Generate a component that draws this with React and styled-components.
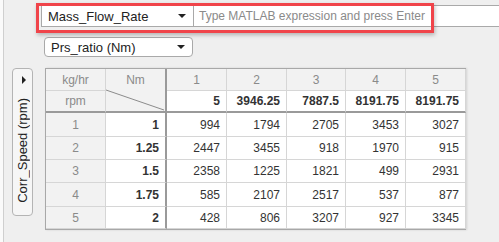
import React from "react";
import styled, { createGlobalStyle } from "styled-components";

const Global = createGlobalStyle`
  html, body {
    margin: 0;
    padding: 0;
    background: #f7f7f7;
    font-family: "Liberation Sans", Arial, sans-serif;
    font-size: 12px;
    color: #333;
  }
`;

const Page = styled.div`
  width: 499px;
  height: 242px;
  overflow: hidden;
  display: flex;
`;

const Gutter = styled.div`
  width: 3px;
  background: #fafafa;
  border-right: 1px solid #cfcfcf;
`;

const Panel = styled.div`
  position: relative;
  flex: 1;
  background: #efefef;
  display: flex;
  flex-direction: column;
`;

const Toolbar = styled.div`
  display: flex;
  margin-top: 5px;
  padding-left: 37px;
  height: 22px;
`;

const Select = styled.div`
  box-sizing: border-box;
  width: ${p => p.$w}px;
  height: ${p => p.$h || 22}px;
  background: #fff;
  border: 1px solid #a9a9a9;
  border-radius: ${p => (p.$round ? 4 : 0)}px;
  display: flex;
  align-items: center;
  justify-content: space-between;
  padding: 0 7px 0 6px;
  font-size: 13px;
  color: #222;
`;

const Caret = styled.span`
  width: 0;
  height: 0;
  border-left: 4px solid transparent;
  border-right: 4px solid transparent;
  border-top: 4px solid #222;
`;

const Expr = styled.div`
  box-sizing: border-box;
  flex: 1;
  height: 22px;
  background: #fff;
  border-top: 1px solid #a9a9a9;
  border-bottom: 1px solid #a9a9a9;
  display: flex;
  align-items: center;
  padding-left: 5px;
  color: #8a8a8a;
  font-size: 12px;
  white-space: nowrap;
`;

const Highlight = styled.div`
  position: absolute;
  left: 32px;
  top: 3px;
  width: 398px;
  height: 30px;
  box-sizing: border-box;
  border: 3px solid #f0444a;
  box-shadow: 1px 2px 4px rgba(0, 0, 0, 0.25);
  pointer-events: none;
`;

const SecondRow = styled.div`
  margin-top: 10px;
  padding-left: 40px;
  display: flex;
`;

const Body = styled.div`
  display: flex;
  margin-top: 11px;
  padding-left: 8px;
  gap: 12px;
`;

const Tab = styled.div`
  box-sizing: border-box;
  width: 21px;
  height: 148px;
  background: #f6f6f6;
  border: 1px solid #b4b4b4;
  border-radius: 4px;
  display: flex;
  flex-direction: column;
  align-items: center;
  padding-top: 7px;
`;

const TabArrow = styled.span`
  width: 0;
  height: 0;
  border-top: 4px solid transparent;
  border-bottom: 4px solid transparent;
  border-left: 4px solid #222;
  margin-left: 2px;
`;

const TabLabel = styled.span`
  writing-mode: vertical-rl;
  transform: rotate(180deg);
  font-size: 13px;
  color: #222;
  margin-top: 14px;
  white-space: nowrap;
`;

const Grid = styled.div`
  display: grid;
  grid-template-columns: 60px 61px 60px 60px 59px 60px 60px;
  grid-template-rows: 22px 22px 24px 23px 23px 24px 22px;
  border-top: 1px solid #a8a8a8;
  border-left: 1px solid #a8a8a8;
  border-bottom: 1px solid #a8a8a8;
  background: #fff;
  box-shadow: 1px 0 2px rgba(0, 0, 0, 0.12);
`;

const Cell = styled.div`
  box-sizing: border-box;
  display: flex;
  align-items: center;
  justify-content: ${p => (p.$center ? "center" : "flex-end")};
  padding: 0 6px;
  background: ${p => (p.$head ? "#f2f2f2" : "#fff")};
  color: ${p => (p.$head ? "#8a8a8a" : "#333")};
  font-weight: ${p => (p.$bold ? "bold" : "normal")};
  border-right: ${p => (p.$thickRight ? "2px solid #9a9a9a" : "1px solid #d6d6d6")};
  border-bottom: ${p => (p.$thickBottom ? "2px solid #9a9a9a" : "1px solid #d6d6d6")};
  font-size: 12px;
`;

const Corner = styled.div`
  position: relative;
  grid-row: span 2;
  box-sizing: border-box;
  background: #f2f2f2;
  border-right: 2px solid #9a9a9a;
  border-bottom: 2px solid #9a9a9a;
  color: #8a8a8a;
  text-align: center;
  padding-top: 4px;
  & svg {
    position: absolute;
    left: 0;
    bottom: 0;
  }
`;

const cols = [
  { id: 1, v: "5" },
  { id: 2, v: "3946.25" },
  { id: 3, v: "7887.5" },
  { id: 4, v: "8191.75" },
  { id: 5, v: "8191.75" },
];

const rows = [
  { id: 1, k: "1", d: [994, 1794, 2705, 3453, 3027] },
  { id: 2, k: "1.25", d: [2447, 3455, 918, 1970, 915] },
  { id: 3, k: "1.5", d: [2358, 1225, 1821, 499, 2931] },
  { id: 4, k: "1.75", d: [585, 2107, 2517, 537, 877] },
  { id: 5, k: "2", d: [428, 806, 3207, 927, 3345] },
];

export default function App() {
  return (
    <Page>
      <Global />
      <Gutter />
      <Panel>
        <Toolbar>
          <Select $w={153}>
            Mass_Flow_Rate <Caret />
          </Select>
          <Expr>Type MATLAB expression and press Enter</Expr>
        </Toolbar>
        <SecondRow>
          <Select $w={149} $h={20} $round>
            Prs_ratio (Nm) <Caret />
          </Select>
        </SecondRow>
        <Body>
          <Tab>
            <TabArrow />
            <TabLabel>Corr_Speed (rpm)</TabLabel>
          </Tab>
          <Grid>
            <Cell $head $center>kg/hr</Cell>
            <Corner>
              Nm
              <svg width="59" height="22">
                <line x1="0" y1="1" x2="58" y2="21" stroke="#8c8c8c" strokeWidth="1" />
              </svg>
            </Corner>
            {cols.map(c => (
              <Cell key={"h" + c.id} $head $center>{c.id}</Cell>
            ))}
            <Cell $head $center $thickBottom>rpm</Cell>
            {cols.map(c => (
              <Cell key={"v" + c.id} $bold $thickBottom>{c.v}</Cell>
            ))}
            {rows.map(r => (
              <React.Fragment key={r.id}>
                <Cell $head $center>{r.id}</Cell>
                <Cell $bold $thickRight>{r.k}</Cell>
                {r.d.map((v, i) => (
                  <Cell key={i}>{v}</Cell>
                ))}
              </React.Fragment>
            ))}
          </Grid>
        </Body>
        <Highlight />
      </Panel>
    </Page>
  );
}
